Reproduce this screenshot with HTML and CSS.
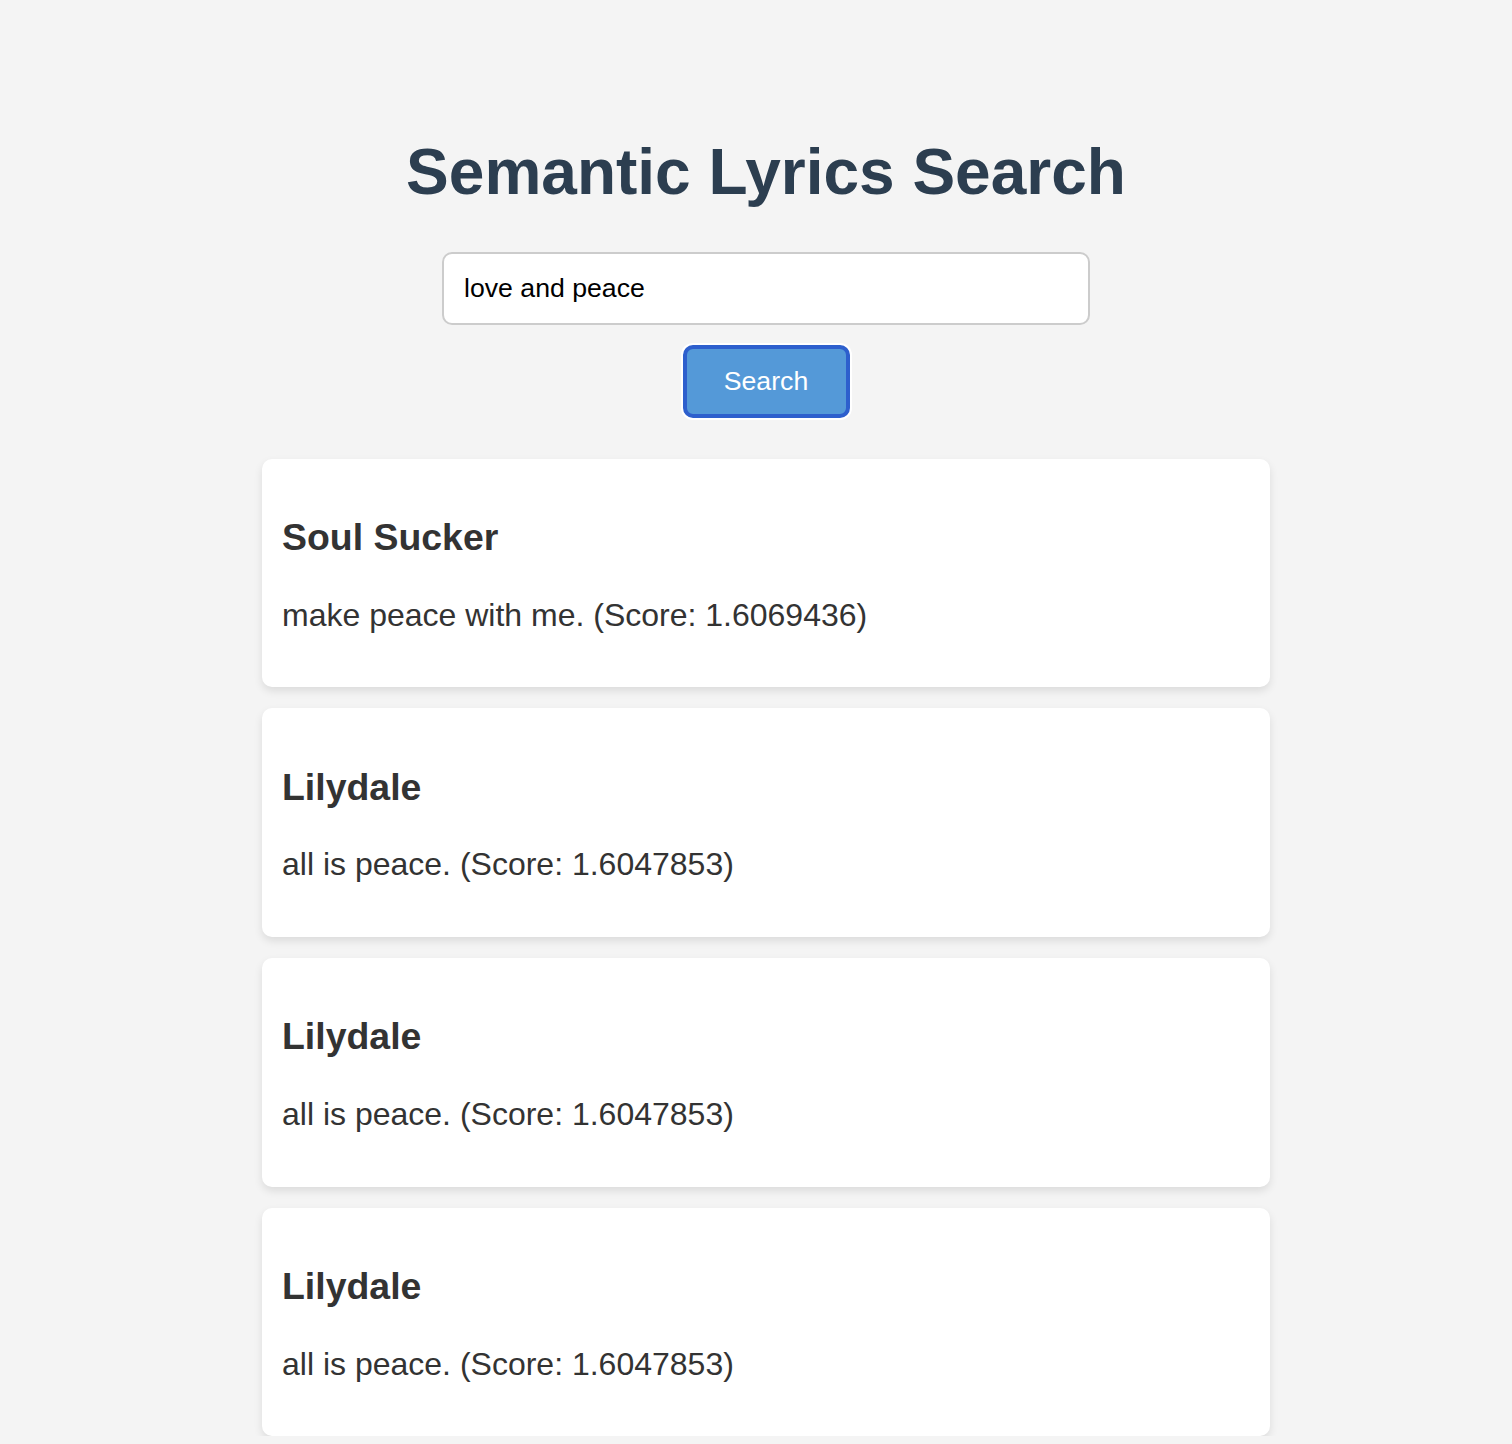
FILE: index.html
```html
<!DOCTYPE html>
<html lang="en">
<head>
<meta charset="utf-8">
<title>Semantic Lyrics Search</title>
<link rel="stylesheet" href="styles.css">
</head>
<body>
<div class="page">
  <h1 class="title">Semantic Lyrics Search</h1>
  <form class="search">
    <input class="query" type="text" value="love and peace">
    <button class="btn" type="button">Search</button>
  </form>
  <div class="results">
    <div class="card">
      <h3 class="song">Soul Sucker</h3>
      <p class="line">make peace with me. (Score: 1.6069436)</p>
    </div>
    <div class="card">
      <h3 class="song">Lilydale</h3>
      <p class="line">all is peace. (Score: 1.6047853)</p>
    </div>
    <div class="card">
      <h3 class="song">Lilydale</h3>
      <p class="line">all is peace. (Score: 1.6047853)</p>
    </div>
    <div class="card">
      <h3 class="song">Lilydale</h3>
      <p class="line">all is peace. (Score: 1.6047853)</p>
    </div>
  </div>
</div>
</body>
</html>
```
FILE: styles.css
```css
html, body {
  margin: 0;
  padding: 0;
  background: #f4f4f4;
  font-family: "Liberation Sans", Arial, sans-serif;
}
.page {
  padding: 136px 0 0 20px;
  display: flex;
  flex-direction: column;
  align-items: center;
}
.title {
  margin: 0 0 42px;
  font-size: 64px;
  font-weight: bold;
  color: #2c3e50;
  line-height: 1.15;
}
.search {
  display: flex;
  flex-direction: column;
  align-items: center;
  gap: 20px;
  margin: 0 0 41px;
}
.query {
  box-sizing: border-box;
  width: 648px;
  height: 73px;
  padding: 0 20px;
  border: 2px solid #cccccc;
  border-radius: 10px;
  background: #fff;
  font-family: "Liberation Sans", Arial, sans-serif;
  font-size: 26.67px;
  color: #000;
  outline: none;
}
.btn {
  box-sizing: border-box;
  width: 167px;
  height: 73px;
  padding: 0;
  border: 4px solid #2d5fcd;
  border-radius: 10px;
  background: #5499d8;
  box-shadow: 0 0 0 2px #ffffff;
  color: #ffffff;
  font-family: "Liberation Sans", Arial, sans-serif;
  font-size: 26.67px;
}
.results {
  width: 1008px;
  display: flex;
  flex-direction: column;
  gap: 21px;
}
.card {
  background: #ffffff;
  border-radius: 10px;
  padding: 20px 20px 22px;
  box-shadow: 0 4px 8px rgba(0, 0, 0, 0.1);
  color: #333333;
}
.song {
  margin: 37.44px 0;
  font-size: 37.44px;
  font-weight: bold;
  line-height: 1.15;
}
.line {
  margin: 37.44px 0 32px;
  font-size: 32px;
  line-height: 1.15;
}
```
